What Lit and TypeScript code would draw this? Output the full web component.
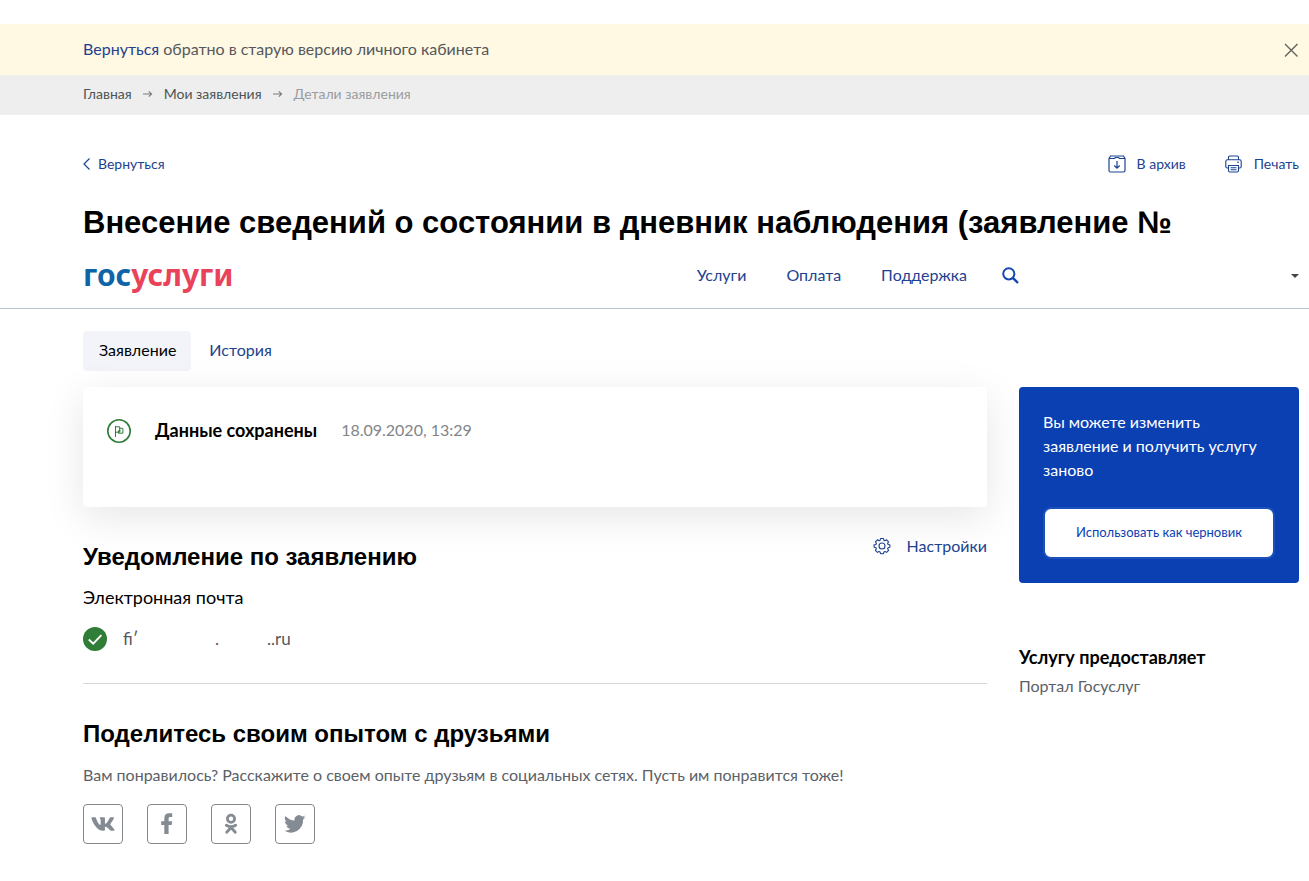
import { LitElement, html, css } from "lit";
import { customElement } from "lit/decorators.js";

@customElement("app-root")
export class AppRoot extends LitElement {
  static styles = css`
    :host {
      display: block;
      min-height: 100vh;
      box-sizing: border-box;
      padding-top: 24px;
      background: #fff;
      color: #000;
      font: 16px/24px Lato, "Open Sans", sans-serif;
      overflow: hidden;
    }
    * { box-sizing: border-box; }
    a { color: #1d428f; text-decoration: none; }
    svg { display: block; flex: none; }
    h1, h2, h3, p { margin: 0; }
    h1, h2 { font-family: "Liberation Sans", Arial, sans-serif; font-weight: 700; }
    button { font: inherit; cursor: pointer; }
    .wrap { padding: 0 10px 0 83px; }
    .notice {
      display: flex; align-items: center; justify-content: space-between;
      height: 51px; padding-bottom: 2px; background: #fff8e3; color: #55595c;
    }
    .close { border: 0; padding: 2px 0 0; background: none; }
    .crumbs {
      display: flex; align-items: center; gap: 11px; height: 40px; padding-bottom: 2px;
      background: #eee; font-size: 14px; line-height: 20px; color: #999c9f;
    }
    .crumbs a { color: #4d5356; }
    .actions {
      display: flex; align-items: center; height: 24px; margin-top: 37px;
      font-size: 14px; line-height: 20px;
    }
    .actions a { display: flex; align-items: center; }
    .back { gap: 8px; margin-right: auto; }
    .archive { gap: 11px; margin-right: 39px; }
    .print { gap: 12px; }
    h1 { margin-top: 27px; font-size: 31px; line-height: 40px; }
    .head {
      display: flex; align-items: center; height: 66px; padding-bottom: 2px;
      border-bottom: 1px solid #bcc5cc;
    }
    .head-left { flex: 1; display: flex; justify-content: space-between; }
    .logo { font: 700 30px/30px "Noto Sans", sans-serif; color: #e8435a; }
    .logo .blue { color: #0f64a8; }
    .nav { display: flex; align-items: center; gap: 40px; }
    .nav button, .account { border: 0; padding: 2px 0 0; background: none; }
    .nav button { margin-left: -5px; }
    .head-right { width: 280px; flex: none; display: flex; justify-content: flex-end; }
    .tabs { display: flex; gap: 2px; margin-top: 22px; }
    .tabs a { padding: 7px 15px 9px 16px; border-radius: 4px; }
    .tabs .active { background: #f2f4fa; color: #000; }
    .grid {
      display: grid; grid-template-columns: minmax(0, 1fr) 280px; gap: 32px;
      margin-top: 16px; align-items: start;
    }
    .card {
      display: flex; align-items: flex-start; gap: 24px; height: 120px; padding: 31px 24px;
      border-radius: 4px; background: #fff; box-shadow: 0 10px 40px rgba(0, 0, 0, 0.1);
    }
    .card svg { margin-top: 1px; }
    .card h3 { font-size: 18px; line-height: 24px; }
    .card time { color: #7f8589; }
    .sub { display: flex; justify-content: space-between; align-items: flex-start; margin-top: 27px; }
    h2 { font-size: 24px; line-height: 32px; }
    .sub h2 { margin-top: 7px; }
    .settings { display: flex; gap: 16px; align-items: center; }
    .label { margin-top: 12px; font-size: 18px; line-height: 24px; }
    .mail { display: flex; align-items: center; margin-top: 18px; color: #55595c; font-size: 17px; line-height: 22px; }
    .mail svg { margin-right: 16px; }
    .mail .a { width: 92px; }
    .mail .b { width: 52px; }
    .share { margin-top: 32px; padding-top: 34px; border-top: 1px solid #d5d8db; }
    .share p { margin-top: 13px; color: #5b6167; }
    .social { display: flex; gap: 24px; margin-top: 17px; }
    .social a {
      display: grid; place-items: center; width: 40px; height: 40px;
      border: 1px solid #85898e; border-radius: 4px;
    }
    .promo { padding: 23px 24px 24px; border-radius: 4px; background: #0b40b3; color: #fff; }
    .draft {
      display: block; width: 100%; height: 52px; margin-top: 25px; padding: 0 0 2px;
      border: 2px solid #1c50bd; border-radius: 8px; background: #fff;
      color: #0b40b3; font-size: 13px;
    }
    .provider { margin-top: 62px; color: #5b6167; }
    .provider h3 { font-size: 18px; line-height: 24px; color: #000; margin-bottom: 5px; }
  `;

  private arrow() {
    return html`<svg width="10" height="8" viewBox="0 0 10 8" aria-hidden="true">
      <path d="M0 4h8.500M5.800 1.300L8.600 4 5.800 6.700" fill="none" stroke="#777c80" stroke-width="1.100"/></svg>`;
  }

  render() {
    return html`
      <div class="wrap notice">
        <p><a href="#">Вернуться</a> обратно в старую версию личного кабинета</p>
        <button class="close" aria-label="Закрыть">
          <svg width="16" height="16" viewBox="0 0 16 16"><path d="M2 2l12.500 12.500M14.500 2L2 14.500" fill="none" stroke="#60645f" stroke-width="1.400"/></svg>
        </button>
      </div>
      <nav class="wrap crumbs">
        <a href="#">Главная</a>${this.arrow()}<a href="#">Мои заявления</a>${this.arrow()}<span>Детали заявления</span>
      </nav>
      <div class="wrap">
        <div class="actions">
          <a class="back" href="#"><svg width="7" height="12" viewBox="0 0 7 12"><path d="M6.500.5L1 6l5.500 5.500" fill="none" stroke="#1d428f" stroke-width="1.200"/></svg>Вернуться</a>
          <a class="archive" href="#">
            <svg width="18" height="18" viewBox="0 0 18 18" fill="none" stroke="#1d428f" stroke-width="1.200"><path d="M1 3.500L2.500 1h13L17 3.500V15.500Q17 17 15.500 17h-13Q1 17 1 15.500zM1 3.500h5.500L7.500 2.500h3l1 1H17M9 6v7M6.300 10.500L9 13.200l2.700-2.700"/></svg>В архив</a>
          <a class="print" href="#">
            <svg width="17" height="18" viewBox="0 0 17 18" fill="none" stroke="#1d428f" stroke-width="1.100"><path d="M3.500 4.500V2.200Q3.500 1 4.700 1h7.600q1.200 0 1.200 1.200v2.300M3.500 13H2.200Q.8 13 .8 11.600V6.400Q.8 4.700 2.400 4.700h12.200q1.600 0 1.600 1.700v5.200q0 1.400-1.400 1.400h-1.300M3.500 10.500h10v5q0 1.500-1.300 1.500H4.800q-1.300 0-1.300-1.500zM5.500 12.700h6M5.500 14.800h6M12 7.300h2"/></svg>Печать</a>
        </div>
        <h1>Внесение сведений о состоянии в дневник наблюдения (заявление №</h1>
      </div>
      <header class="wrap head">
        <div class="head-left">
          <a class="logo" href="#"><span class="blue">гос</span>услуг<span lang="bg">и</span></a>
          <nav class="nav">
            <a href="#">Услуги</a><a href="#">Оплата</a><a href="#">Поддержка</a>
            <button aria-label="Поиск"><svg width="17" height="17" viewBox="0 0 17 17" fill="none" stroke="#1546ad" stroke-width="2"><circle cx="6.800" cy="6.800" r="5.600"/><path d="M10.800 10.800L16 16" stroke-width="2.400"/></svg></button>
          </nav>
        </div>
        <div class="head-right">
          <button class="account" aria-label="Меню пользователя"><svg width="8" height="4" viewBox="0 0 8 4"><path d="M0 0h8L4 4z" fill="#444"/></svg></button>
        </div>
      </header>
      <main class="wrap">
        <nav class="tabs"><a class="active" href="#">Заявление</a><a href="#">История</a></nav>
        <div class="grid">
          <div>
            <section class="card">
              <svg width="24" height="24" viewBox="0 0 24 24" fill="none" stroke="#2f7d37"><circle cx="12" cy="12" r="11.200" stroke-width="1.600"/><path d="M8.500 7v11M8.500 7.800h4.200v5.400H8.500M12.700 9.300h3.200v4.900h-4.500v-2.500h2.200" stroke-width="1"/></svg>
              <h3>Данные сохранены</h3>
              <time>18.09.2020, 13:29</time>
            </section>
            <div class="sub">
              <h2>Уведомление по заявлению</h2>
              <a class="settings" href="#">
                <svg width="18" height="18" viewBox="0 0 18 18" fill="none" stroke="#1d428f" stroke-width="1.100"><circle cx="9" cy="9" r="3"/><path d="M7.500 1.500h3l.4 1.800 1.100.5 1.600-1 2 2-1 1.600.5 1.100 1.800.4v2.400l-1.800.4-.5 1.100 1 1.600-2 2-1.600-1-1.100.5-.4 1.800h-3l-.4-1.800-1.100-.5-1.600 1-2-2 1-1.600-.5-1.100-1.800-.4V7.900l1.800-.4.500-1.100-1-1.600 2-2 1.600 1 1.100-.5z" stroke-linejoin="round"/></svg>Настройки</a>
            </div>
            <p class="label">Электронная почта</p>
            <div class="mail">
              <svg width="24" height="24" viewBox="0 0 24 24"><circle cx="12" cy="12" r="12" fill="#2f7d37"/><path d="M5.800 12.500l4.400 4.200 8.200-8.500" fill="none" stroke="#fff" stroke-width="1.900"/></svg>
              <span class="a">fi′</span><span class="b">.</span><span>..ru</span>
            </div>
            <section class="share">
              <h2>Поделитесь своим опытом с друзьями</h2>
              <p>Вам понравилось? Расскажите о своем опыте друзьям в социальных сетях. Пусть им понравится тоже!</p>
              <div class="social">
                <a href="#" aria-label="ВКонтакте"><svg width="24" height="22" viewBox="6 0 564 512" fill="#858b93"><path d="M545 117.700c3.700-12.500 0-21.700-17.800-21.700h-58.900c-15 0-21.900 7.900-25.600 16.700 0 0-30 73.100-72.400 120.500-13.700 13.700-20 18.100-27.500 18.100-3.700 0-9.400-4.400-9.400-16.900V117.700c0-15-4.200-21.700-16.600-21.700h-92.600c-9.400 0-15 7-15 13.500 0 14.200 21.200 17.500 23.400 57.500v86.800c0 19-3.400 22.500-10.900 22.500-20 0-68.600-73.400-97.400-157.400-5.800-16.300-11.500-22.900-26.600-22.900H38.800c-16.800 0-20.200 7.900-20.200 16.700 0 15.600 20 93.100 93.100 195.500C160.400 378.100 229 416 291.400 416c37.500 0 42.100-8.400 42.100-22.900 0-66.800-3.400-73.100 15.400-73.100 8.700 0 23.700 4.400 58.700 38.100 40 40 46.600 57.900 69 57.900h58.900c16.800 0 25.300-8.400 20.400-25-11.200-34.900-86.900-106.700-90.300-111.500-8.700-11.200-6.200-16.200 0-26.200.1-.1 72-101.300 79.400-135.600z"/></svg></a>
                <a href="#" aria-label="Facebook"><svg width="24" height="24" viewBox="0 0 24 24" fill="#858b93"><path d="M9.300 22V13H6.200V9.300h3.100V6.500C9.300 3 11 1.200 14 1.200h3.200v3.700H15.300c-1.300 0-1.700.6-1.700 1.800v2.600h3.600l-.5 3.700h-3.100v9z"/></svg></a>
                <a href="#" aria-label="Одноклассники"><svg width="24" height="24" viewBox="0 0 24 24" fill="none" stroke="#858b93"><circle cx="12" cy="6.700" r="3.600" stroke-width="2.800"/><path d="M7.300 13.200q4.700 3 9.400 0M12 15.500l-4.300 4.700M12 15.500l4.300 4.700" stroke-width="2.800" stroke-linecap="round"/></svg></a>
                <a href="#" aria-label="Twitter"><svg width="24" height="24" viewBox="0 0 24 24" fill="#858b93"><path d="M22.500 5.200c-.8.400-1.600.6-2.500.7.900-.5 1.600-1.400 1.900-2.400-.8.500-1.800.9-2.800 1.100a4.400 4.400 0 0 0-7.500 4C8 8.400 4.700 6.700 2.500 4a4.400 4.400 0 0 0 1.400 5.800c-.7 0-1.400-.2-2-.5 0 2.100 1.500 4 3.500 4.400-.6.200-1.300.2-2 .1.600 1.700 2.200 3 4.100 3a8.800 8.800 0 0 1-6.500 1.800 12.400 12.400 0 0 0 19.100-11c.9-.6 1.700-1.400 2.400-2.400z"/></svg></a>
              </div>
            </section>
          </div>
          <aside>
            <section class="promo">
              <p>Вы можете изменить заявление и получить услугу заново</p>
              <button class="draft">Использовать как черновик</button>
            </section>
            <section class="provider"><h3>Услугу предоставляет</h3><p>Портал Госуслуг</p></section>
          </aside>
        </div>
      </main>
    `;
  }
}
